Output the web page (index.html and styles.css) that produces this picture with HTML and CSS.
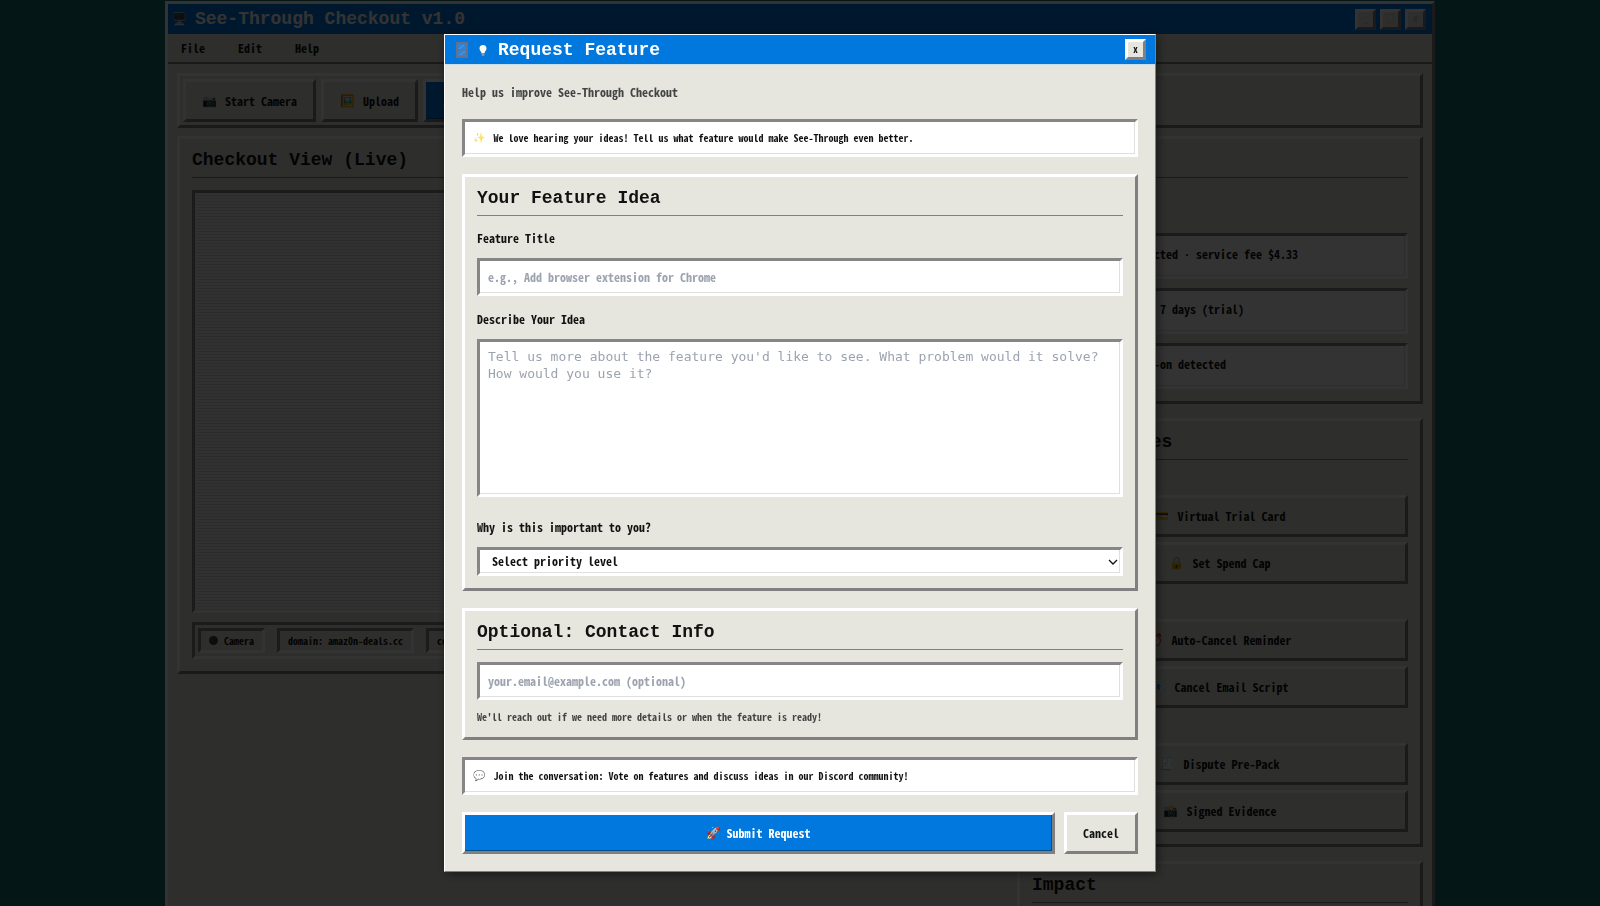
FILE: index.html
```
<!DOCTYPE html>
<html lang="en">
<head>
  <meta charset="UTF-8">
  <meta name="viewport" content="width=device-width, initial-scale=1.0">
  <title>See-Through Checkout v1.0</title>
  <link rel="stylesheet" href="styles.css">
</head>
<body>
  <div class="window">
    <div class="title-bar">
      <span class="icon">🖥️</span>
      <h1>See-Through Checkout v1.0</h1>
      <div class="window-controls">
        <button class="control">_</button>
        <button class="control">□</button>
        <button class="control">x</button>
      </div>
    </div>
    <nav class="menu-bar">
      <a href="#">File</a>
      <a href="#">Edit</a>
      <a href="#">Help</a>
    </nav>

    <main class="content">
      <div class="toolbar raised">
        <button class="btn"><span class="icon">📷</span>Start Camera</button>
        <button class="btn"><span class="icon">🖼️</span>Upload</button>
        <button class="btn primary"><span class="icon">🧪</span>Try Demo</button>
      </div>

      <div class="columns">
        <section class="panel raised">
          <h2>Checkout View (Live)</h2>
          <div class="preview sunken"></div>
          <div class="status-bar sunken">
            <span class="status sunken"><i class="dot"></i>Camera</span>
            <span class="status sunken">domain: amaz0n-deals.cc</span>
            <span class="status sunken">confidence: 97%</span>
          </div>
        </section>

        <div class="sidebar">
          <section class="panel raised">
            <h2>Findings</h2>
            <ul class="alerts">
              <li class="sunken"><span class="icon">⚠️</span><span>Hidden fee detected <span class="sep">·</span> service fee $4.33</span></li>
              <li class="sunken"><span class="icon">⚠️</span>Auto-renewal in 7 days (trial)</li>
              <li class="sunken"><span class="icon">⚠️</span>Pre-checked add-on detected</li>
            </ul>
          </section>

          <section class="panel raised">
            <h2>Counter-Moves</h2>
            <div class="group">
              <h3>Protect</h3>
              <button class="btn"><span class="icon">💳</span>Virtual Trial Card</button>
              <button class="btn"><span class="icon">🔒</span>Set Spend Cap</button>
            </div>
            <div class="group">
              <h3>Cancel</h3>
              <button class="btn"><span class="icon">⏰</span>Auto-Cancel Reminder</button>
              <button class="btn"><span class="icon">📧</span>Cancel Email Script</button>
            </div>
            <div class="group">
              <h3>Evidence</h3>
              <button class="btn"><span class="icon">🧾</span>Dispute Pre-Pack</button>
              <button class="btn"><span class="icon">📸</span>Signed Evidence</button>
            </div>
          </section>

          <section class="panel raised">
            <h2>Impact</h2>
          </section>
        </div>
      </div>
    </main>
  </div>

  <div class="overlay">
    <div class="modal" role="dialog" aria-labelledby="modalTitle">
      <div class="modal-title">
        <svg class="frame-icon" width="12" height="16" viewBox="0 0 12 16">
          <rect x="1" y="1" width="10" height="14" fill="#2f86d8" stroke="#6a7086" stroke-width="2"/>
          <path d="M2 8h8" stroke="#6a7086"/>
          <path d="M3 7l5-4M4 13l5-4" stroke="#4aa0f0"/>
        </svg>
        <svg class="bulb-icon" width="10" height="15" viewBox="0 0 10 15">
          <path d="M5 3a3.5 3.5 0 0 1 3.5 3.5C8.500 8.500 7 9 6.500 11h-3C3 9 1.500 8.500 1.500 6.500A3.500 3.500 0 0 1 5 3z" fill="#fdfcef"/>
          <path d="M3.500 11h3v2l-1 1h-1l-1-1z" fill="#8f9aa8"/>
        </svg>
        <h2 id="modalTitle">Request Feature</h2>
        <button class="control" aria-label="Close">x</button>
      </div>

      <form class="modal-body">
        <p class="subtitle">Help us improve See-Through Checkout</p>

        <div class="info sunken"><span class="icon">✨</span>We love hearing your ideas! Tell us what feature would make See-Through even better.</div>

        <section class="panel raised">
          <h2>Your Feature Idea</h2>
          <div class="field">
            <label for="featureTitle">Feature Title</label>
            <input class="sunken" type="text" id="featureTitle" placeholder="e.g., Add browser extension for Chrome">
          </div>
          <div class="field description">
            <label for="featureText">Describe Your Idea</label>
            <textarea class="sunken" id="featureText" placeholder="Tell us more about the feature you'd like to see. What problem would it solve? How would you use it?"></textarea>
          </div>
          <div class="field">
            <label for="priority">Why is this important to you?</label>
            <div class="select-wrap">
              <select class="sunken" id="priority">
                <option>Select priority level</option>
              </select>
              <svg class="chevron" width="10" height="6" viewBox="0 0 10 6">
                <path d="M1 1l4 4 4-4" fill="none" stroke="#111" stroke-width="1.3"/>
              </svg>
            </div>
          </div>
        </section>

        <section class="panel raised">
          <h2>Optional: Contact Info</h2>
          <input class="sunken" type="email" aria-label="Email" placeholder="your.email@example.com (optional)">
          <p class="hint">We'll reach out if we need more details or when the feature is ready!</p>
        </section>

        <div class="info sunken"><span class="icon">💬</span>Join the conversation: Vote on features and discuss ideas in our Discord community!</div>

        <div class="actions">
          <button type="submit" class="btn primary"><span class="icon">🚀</span>Submit Request</button>
          <button type="button" class="btn">Cancel</button>
        </div>
      </form>
    </div>
  </div>
</body>
</html>
```
FILE: styles.css
```
* {
  box-sizing: border-box;
}
body {
  margin: 0;
  height: 100vh;
  overflow: hidden;
  background: #147070;
  color: #111;
  font: bold 12px/20px "Noto Sans Mono CJK SC", "DejaVu Sans Mono", monospace;
}
h1, h2, h3, p, ul {
  margin: 0;
  padding: 0;
}
h1, h2 {
  font: bold 18px/18px "Liberation Mono", monospace;
}
button, input, select {
  font: inherit;
  color: inherit;
}
.icon {
  font-family: "Noto Color Emoji", sans-serif;
  font-weight: normal;
}

/* bevels */
.raised, .btn, .control {
  border: 3px solid;
  border-color: #fff #808080 #808080 #fff;
  background: #e6e6df;
}
.sunken {
  border: 3px solid;
  border-color: #868686 #fff #fff #868686;
  background: #fff;
  box-shadow: inset -1px -1px 0 #dfdfdf;
}

/* app window */
.window {
  max-width: 1270px;
  margin: 1px auto 0;
  border: 3px solid;
  border-color: #fff #808080 #808080 #fff;
  background: #e6e6df;
}
.title-bar {
  display: flex;
  align-items: center;
  gap: 8px;
  height: 30px;
  padding: 0 6px 0 4px;
  background: #0078de;
  color: #fff;
}
.window-controls {
  display: flex;
  gap: 4px;
  margin-left: auto;
}
.control {
  width: 21px;
  height: 21px;
  padding: 0;
  color: #111;
  font-size: 9px;
  line-height: 14px;
}
.window-controls .control {
  color: #c4c4c0;
}
.menu-bar {
  display: flex;
  height: 30px;
  padding: 4px 13px;
  border-bottom: 2px solid #808080;
}
.menu-bar a {
  margin-right: 33px;
  color: inherit;
  text-decoration: none;
}
.content {
  padding: 9px;
}
.toolbar {
  display: flex;
  gap: 5px;
  margin-bottom: 8px;
  padding: 3px;
}
.btn {
  display: flex;
  align-items: center;
  justify-content: center;
  gap: 8px;
  height: 42px;
  padding: 0 16px;
  white-space: nowrap;
}
.toolbar .btn {
  height: 43px;
}
.btn.primary {
  background: #0078de;
  color: #fff;
  box-shadow: inset -1px -1px 0 #00508f;
}
.columns {
  display: grid;
  grid-template-columns: 1fr 406px;
  gap: 14px;
  align-items: start;
}
.panel {
  padding: 12px;
}
.panel h2 {
  margin-bottom: 12px;
  padding-bottom: 8px;
  border-bottom: 1px solid #808080;
}
.preview {
  height: 423px;
  margin-bottom: 9px;
  background: repeating-linear-gradient(#f4f4f4 0 2px, #dcdcdc 2px 3px);
}
.status-bar {
  display: flex;
  gap: 12px;
  padding: 3px;
  background: #e6e6df;
}
.status {
  display: flex;
  align-items: center;
  gap: 6px;
  height: 25px;
  padding: 0 8px;
  background: #e6e6df;
  font-size: 10px;
}
.dot {
  width: 9px;
  height: 9px;
  border-radius: 50%;
  background: #444;
}
.sidebar {
  display: flex;
  flex-direction: column;
  gap: 14px;
}
.alerts {
  display: grid;
  gap: 9px;
  margin-top: 55px;
  list-style: none;
}
.alerts li {
  display: flex;
  gap: 6px;
  height: 46px;
  padding: 8px;
}
.sep {
  font: bold 10px "DejaVu Sans Mono", monospace;
}
.group {
  display: grid;
  gap: 5px;
  margin-bottom: 12px;
}
.group:last-child {
  margin-bottom: 0;
}
.group h3 {
  font-size: 10px;
  line-height: 18px;
}

/* request dialog */
.overlay {
  position: fixed;
  inset: 0;
  display: flex;
  align-items: center;
  justify-content: center;
  background: rgba(0, 0, 0, 0.8);
}
.modal {
  width: 712px;
  border: 1px solid;
  border-color: #fff #808080 #808080 #fff;
  background: #e6e6df;
  box-shadow: 2px 2px 10px rgba(0, 0, 0, 0.5);
}
.modal-title {
  display: flex;
  align-items: center;
  gap: 10px;
  height: 30px;
  padding: 0 9px 0 11px;
  border-bottom: 1px solid #c8dcec;
  background: #0078de;
  color: #fff;
}
.modal-title .control {
  margin-left: auto;
}
.modal-body {
  display: grid;
  gap: 17px;
  padding: 17px;
}
.subtitle {
  color: #444;
}
.info {
  display: flex;
  align-items: center;
  gap: 8px;
  height: 38px;
  padding: 0 8px;
  font-size: 10px;
}
.info .icon {
  opacity: 0.7;
}
.field {
  margin-bottom: 13px;
}
.field.description {
  margin-bottom: 20px;
}
.field:last-child {
  margin-bottom: 0;
}
.field label {
  display: block;
  margin-bottom: 10px;
  line-height: 20px;
}
input, textarea, select {
  display: block;
  width: 100%;
  border-radius: 0;
  outline: 0;
}
input {
  height: 38px;
  padding: 0 8px 2px;
}
textarea {
  height: 158px;
  padding: 6px 8px;
  font: 13px/17px "DejaVu Sans Mono", monospace;
  resize: none;
}
.select-wrap {
  position: relative;
}
select {
  height: 29px;
  padding: 0 12px 2px;
  appearance: none;
}
.chevron {
  position: absolute;
  top: 12px;
  right: 5px;
  pointer-events: none;
}
::placeholder {
  color: #9ca3af;
  opacity: 1;
}
.hint {
  margin-top: 8px;
  color: #444;
  font-size: 10px;
  line-height: 17px;
}
.actions {
  display: flex;
  gap: 9px;
}
.actions .primary {
  flex: 1;
  gap: 5px;
}
```
